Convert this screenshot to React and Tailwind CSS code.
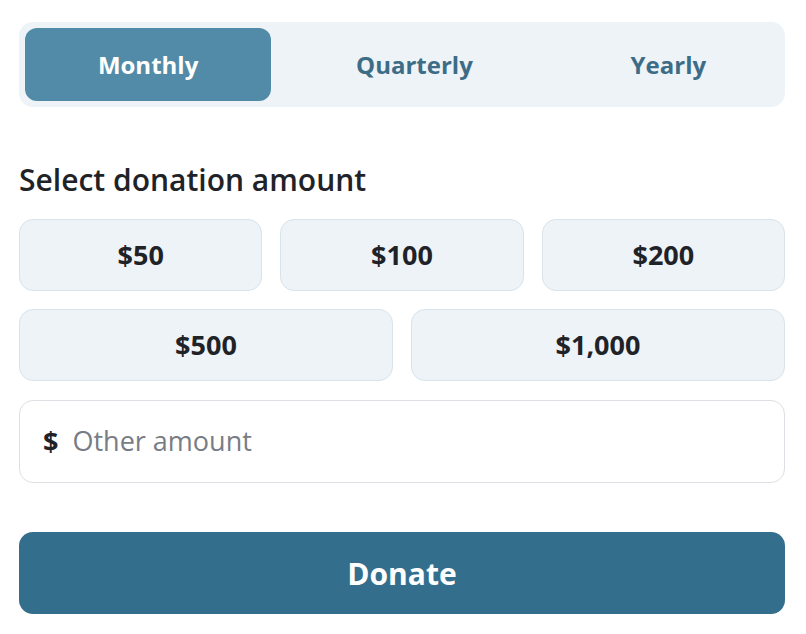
import React, { useState } from 'react';

const periods = ['Monthly', 'Quarterly', 'Yearly'];

const amounts = [
  { label: '$50', span: 'col-span-2' },
  { label: '$100', span: 'col-span-2' },
  { label: '$200', span: 'col-span-2' },
  { label: '$500', span: 'col-span-3' },
  { label: '$1,000', span: 'col-span-3' },
];

const App = () => {
  const [period, setPeriod] = useState('Monthly');
  const [other, setOther] = useState('');

  return (
    <div className="min-h-screen bg-white pl-[19px] pr-[21px] pt-[22px] font-['Open_Sans',sans-serif] text-[#1f2328]">
      <div className="flex gap-3 rounded-[14px] bg-[#eef3f8] p-[6px]">
        {periods.map((p) => (
          <button
            key={p}
            onClick={() => setPeriod(p)}
            className={
              p === period
                ? 'flex-auto h-[73px] rounded-[12px] bg-[#518ba7] text-[24px] font-bold text-white'
                : 'flex-auto h-[73px] rounded-[12px] text-[24px] font-bold text-[#3d6d86]'
            }
          >
            {p}
          </button>
        ))}
      </div>

      <h2 className="mt-[55px] text-[30px] font-semibold leading-[36px] text-[#1f2328]">
        Select donation amount
      </h2>

      <div className="mt-[21px] grid grid-cols-6 gap-[18px]">
        {amounts.map((a) => (
          <button
            key={a.label}
            className={`${a.span} h-[72px] rounded-[14px] border border-[#d8e3eb] bg-[#eef3f8] text-[27px] font-bold text-[#1f2328]`}
          >
            {a.label}
          </button>
        ))}
      </div>

      <div className="mt-[19px] flex h-[83px] items-center rounded-[14px] border border-[#dcdfe3] bg-white px-[23px]">
        <span className="text-[27px] font-bold text-[#1f2328]">$</span>
        <input
          value={other}
          onChange={(e) => setOther(e.target.value)}
          placeholder="Other amount"
          className="ml-[14px] w-full bg-transparent text-[27px] text-[#1f2328] outline-none placeholder:text-[#787c85]"
        />
      </div>

      <button className="mt-[49px] h-[82px] w-full rounded-[14px] bg-[#336f8d] text-[30px] font-bold text-white">
        Donate
      </button>
    </div>
  );
};

export default App;
